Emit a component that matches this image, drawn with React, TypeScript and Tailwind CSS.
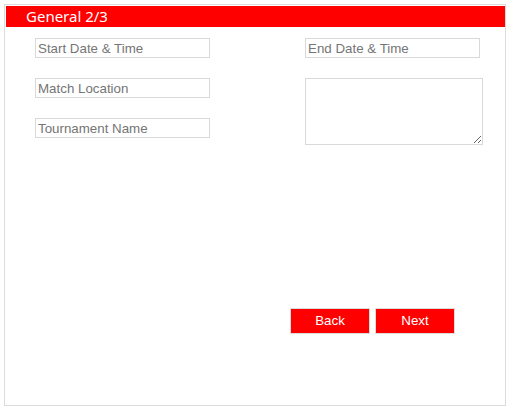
import React from "react";

const inputCls =
  "block box-border w-[175px] h-[20px] border border-[#d9d9d9] bg-white px-[2px] text-[13.333px] text-[#222] placeholder:text-[#757575] outline-none";

export default function App() {
  return (
    <div
      className="m-1 box-border h-[402px] w-[502px] border border-[#dcdcdc] bg-white"
      style={{ fontFamily: "'Liberation Sans', Arial, sans-serif" }}
    >
      <div className="ml-px mt-px flex h-[21px] w-[499px] items-center bg-[#ff0000] pl-5">
        <span
          className="text-[15px] leading-none text-white"
          style={{ fontFamily: "'Noto Sans', 'Open Sans', sans-serif" }}
        >
          General 2/3
        </span>
      </div>
      <div className="flex pl-[30px] pt-[11px]">
        <div className="flex w-[175px] flex-col gap-[20px]">
          <input className={inputCls} placeholder="Start Date & Time" />
          <input className={inputCls} placeholder="Match Location" />
          <input className={inputCls} placeholder="Tournament Name" />
        </div>
        <div className="ml-[95px] flex flex-col gap-[20px]">
          <input className={inputCls} placeholder="End Date & Time" />
          <textarea className="block box-border h-[67px] w-[178px] border border-[#d9d9d9] bg-white outline-none" />
        </div>
      </div>
      <div className="mt-[163px] flex gap-[5px] pl-[285px]">
        <button className="box-border h-[26px] w-[80px] border border-[#dcdcdc] bg-[#ff0000] text-[13.333px] text-white">
          Back
        </button>
        <button className="box-border h-[26px] w-[80px] border border-[#dcdcdc] bg-[#ff0000] text-[13.333px] text-white">
          Next
        </button>
      </div>
    </div>
  );
}
